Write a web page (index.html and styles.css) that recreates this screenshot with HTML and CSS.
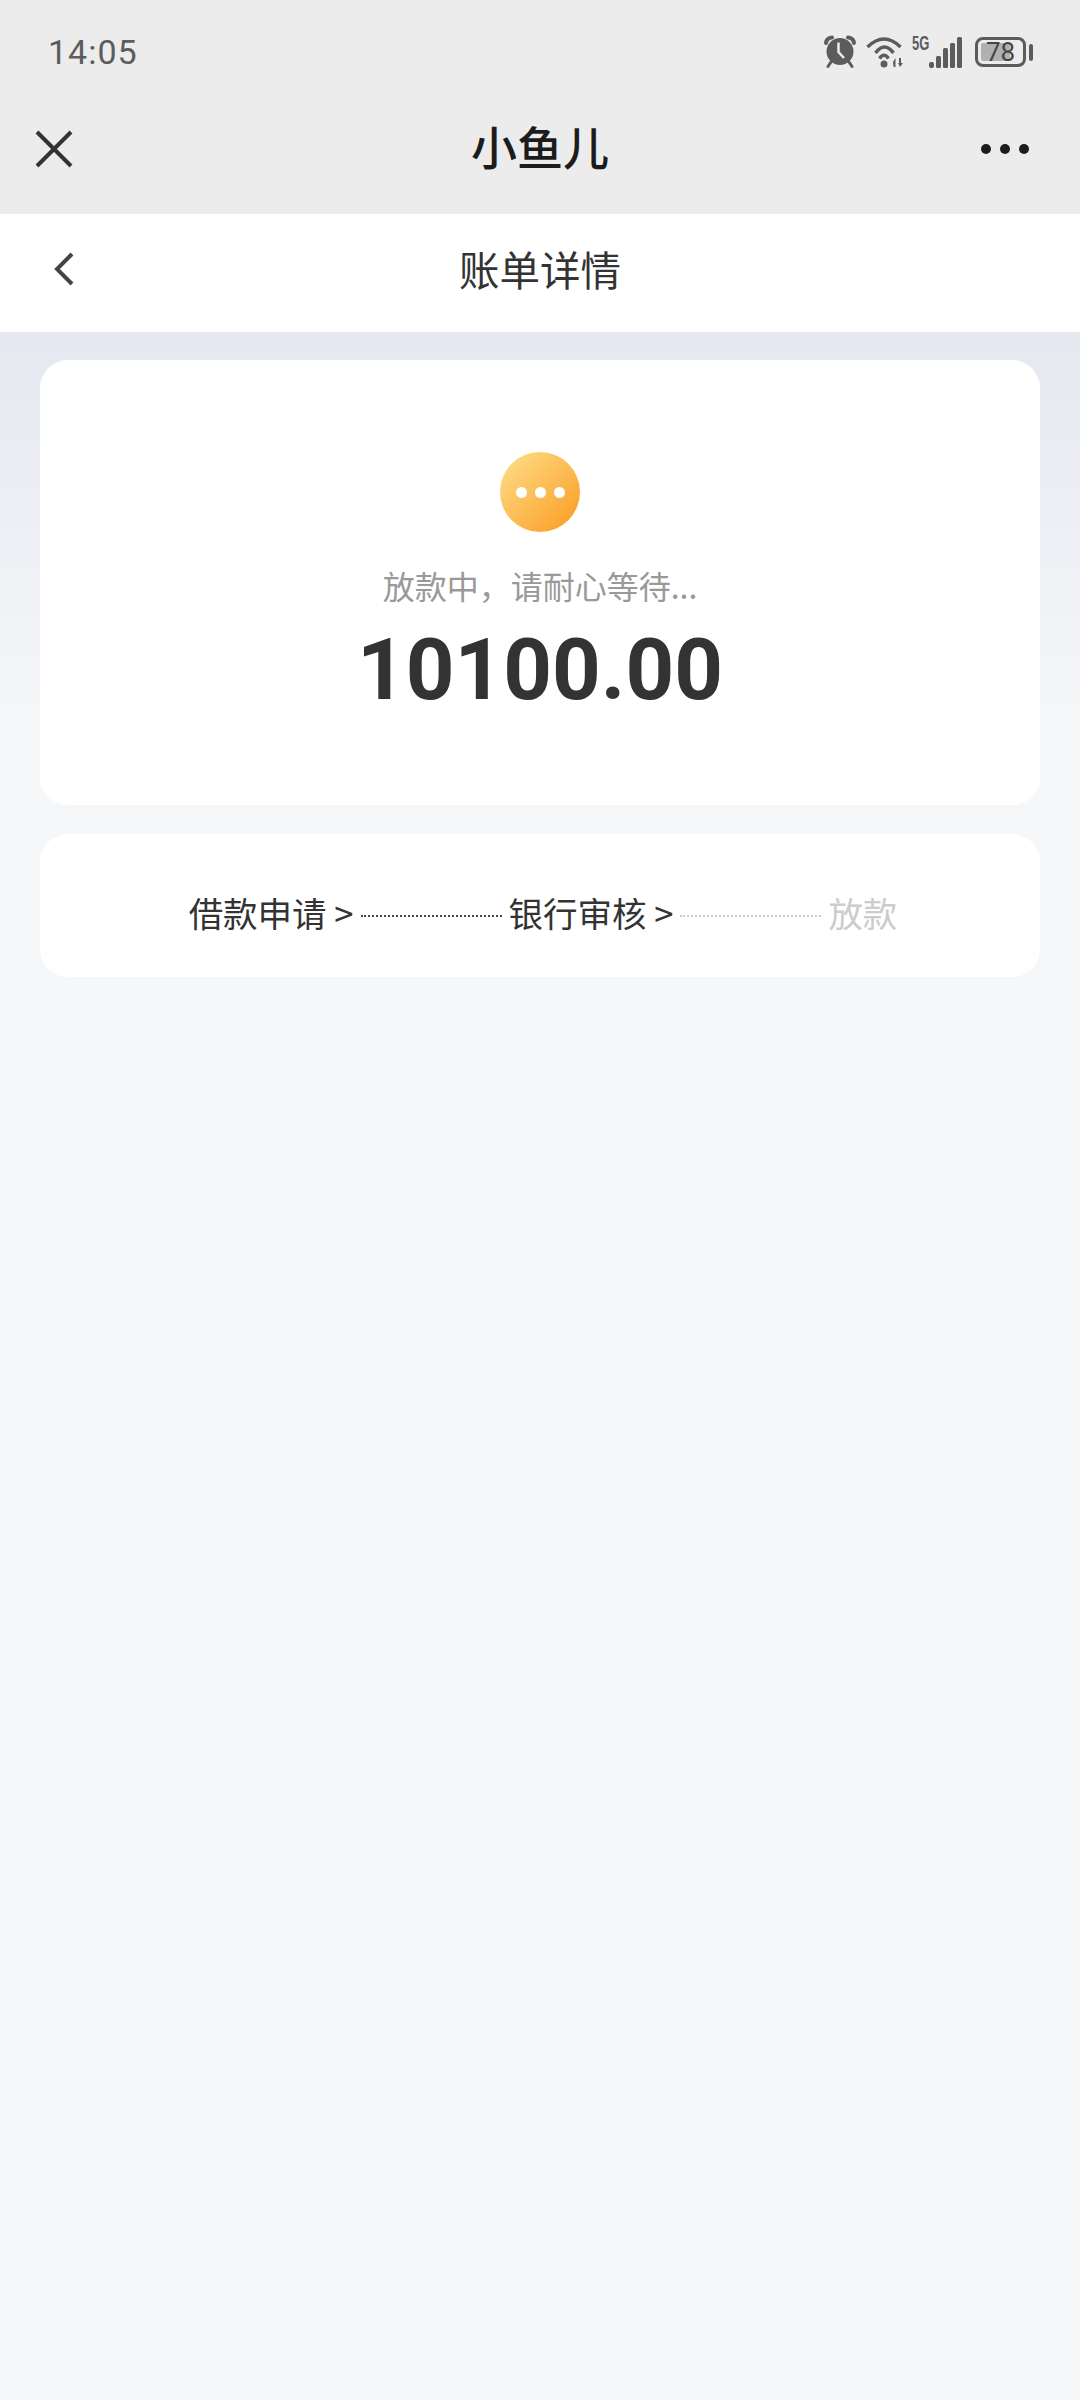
FILE: index.html
```html
<!DOCTYPE html>
<html lang="zh-CN">
<head>
<meta charset="utf-8">
<title>账单详情</title>
<link rel="stylesheet" href="styles.css">
</head>
<body>
<header class="chrome">
  <div class="status">
    <span class="time">14:05</span>
    <div class="status-icons">
      <svg class="ic-alarm" width="34" height="34" viewBox="0 0 34 34"><circle cx="17" cy="16.500" r="13.500" fill="#5c5c5c"/><path d="M3 8Q3.500 3 9 2.500M31 8Q30.500 3 25 2.500" fill="none" stroke="#5c5c5c" stroke-width="4" stroke-linecap="round"/><path d="M8 27 5 31.500M26 27 29 31.500" stroke="#5c5c5c" stroke-width="3" stroke-linecap="round"/><path d="M15.500 7.500V17L21 23" fill="none" stroke="#ececec" stroke-width="2.500"/></svg>
      <svg class="ic-wifi" width="38" height="32" viewBox="0 0 38 32"><g fill="none" stroke="#5c5c5c" stroke-width="3.500"><path d="M1.500 11Q18 -5 34.500 11"/><path d="M9.500 17Q18.500 5 27.500 17"/><path d="M13.500 22.500Q18 16 22.500 22.500"/></g><circle cx="18" cy="28" r="3.500" fill="#5c5c5c"/><path d="M27 26l2.500-4v9h-2zM33 22h2v5l2 0-3 4-2-4h1z" fill="#5c5c5c"/></svg>
      <span class="net">5G</span>
      <svg class="ic-signal" width="33" height="31" viewBox="0 0 33 31"><g fill="#5c5c5c"><rect x="0" y="25" width="5" height="6" rx="2"/><rect x="7" y="19" width="5" height="12" rx="1.500"/><rect x="14" y="11" width="5" height="20" rx="1.500"/><rect x="21" y="6" width="5" height="25" rx="1.500"/><rect x="28" y="0" width="5" height="31" rx="1.500"/></g></svg>
      <div class="battery">
        <div class="battery-body">
          <div class="battery-fill"></div>
          <span class="battery-num">78</span>
        </div>
        <div class="battery-tip"></div>
      </div>
    </div>
  </div>
  <div class="topbar">
    <svg class="ic-close" width="38" height="38" viewBox="0 0 38 38"><path d="M2 2 36 36M36 2 2 36" stroke="#333" stroke-width="4" fill="none"/></svg>
    <h1 class="topbar-title">小鱼儿</h1>
    <svg class="ic-more" width="48" height="10" viewBox="0 0 48 10"><circle cx="5" cy="5" r="5" fill="#1c1c1c"/><circle cx="24" cy="5" r="5" fill="#1c1c1c"/><circle cx="43" cy="5" r="5" fill="#1c1c1c"/></svg>
  </div>
</header>
<nav class="subnav">
  <svg class="ic-back" width="20" height="34" viewBox="0 0 20 34"><path d="M18 2 3 17 18 32" fill="none" stroke="#444" stroke-width="4"/></svg>
  <h2 class="subnav-title">账单详情</h2>
</nav>
<main class="content">
  <section class="card card-status">
    <div class="pending"><i></i><i></i><i></i></div>
    <p class="pending-text">放款中，请耐心等待...</p>
    <p class="amount">10100.00</p>
  </section>
  <section class="card card-steps">
    <span class="step">借款申请 &gt;</span>
    <span class="line"></span>
    <span class="step">银行审核 &gt;</span>
    <span class="line line-off"></span>
    <span class="step step-off">放款</span>
  </section>
</main>
</body>
</html>
```
FILE: styles.css
```css
* { box-sizing: border-box; }
html, body { margin: 0; padding: 0; }
body {
  width: 1080px;
  height: 2400px;
  overflow: hidden;
  background: #f6f7f9;
  font-family: "Noto Sans CJK SC", "Noto Sans", sans-serif;
  display: flex;
  flex-direction: column;
}
.chrome { background: #ececec; height: 214px; }
.status {
  height: 84px;
  padding: 30px 47px 0 48px;
  display: flex;
  justify-content: space-between;
  align-items: flex-start;
}
.time {
  font: 400 34px/44px Roboto, sans-serif;
  color: #5c5c5c;
  letter-spacing: 1px;
}
.status-icons { display: flex; align-items: flex-start; }
.ic-alarm { margin-top: 5px; }
.ic-wifi { margin: 6px 0 0 9px; }
.net {
  font: 700 20px/16px "Liberation Sans", sans-serif;
  color: #5c5c5c;
  width: 17px;
  margin: 5px 0 0 8px;
  transform: scaleX(.65);
  transform-origin: left;
}
.ic-signal { margin: 7px 0 0 0; }
.battery { display: flex; align-items: center; margin: 7px 0 0 13px; }
.battery-body {
  width: 51px;
  height: 30px;
  border: 3px solid #5c5c5c;
  border-radius: 8px;
  padding: 3px;
  position: relative;
}
.battery-fill { width: 74%; height: 100%; background: #b0b0b0; border-radius: 2px; }
.battery-num {
  position: absolute;
  inset: -3px;
  text-align: center;
  font: 400 26px/30px Roboto, sans-serif;
  color: #444;
}
.battery-tip { width: 4px; height: 17px; margin-left: 3px; background: #5c5c5c; border-radius: 2px; }
.topbar {
  height: 130px;
  padding: 0 51px 0 35px;
  display: flex;
  align-items: center;
  justify-content: space-between;
  position: relative;
}
.topbar-title {
  margin: 0;
  position: absolute;
  left: 0;
  right: 0;
  text-align: center;
  font-size: 46px;
  line-height: 66px;
  font-weight: 500;
  color: #1c1c1c;
  top: 28px;
}
.subnav {
  height: 118px;
  background: #fff;
  display: flex;
  align-items: center;
  padding: 0 0 8px 54px;
  position: relative;
}
.subnav-title {
  margin: 0;
  position: absolute;
  left: 0;
  right: 0;
  text-align: center;
  font-size: 40.500px;
  line-height: 60px;
  font-weight: 400;
  color: #333;
  top: 25px;
}
.content {
  flex: 1;
  padding: 28px 40px 0;
  display: flex;
  flex-direction: column;
  gap: 29px;
  background: linear-gradient(180deg, #e5e8f0 0, #f6f7f9 400px);
}
.card { background: #fff; border-radius: 28px; }
.card-status {
  height: 445px;
  padding-top: 92px;
  display: flex;
  flex-direction: column;
  align-items: center;
}
.pending {
  width: 80px;
  height: 80px;
  border-radius: 50%;
  background: linear-gradient(135deg, #fde08c, #fb9a1f);
  display: flex;
  align-items: center;
  justify-content: center;
  gap: 8px;
}
.pending i { width: 11px; height: 11px; border-radius: 50%; background: #fff; }
.pending-text {
  margin: 29px 0 0;
  font-size: 32px;
  line-height: 48px;
  color: #999;
}
.amount {
  margin: 9px 0 0;
  font: 700 85px/104px Roboto, sans-serif;
  color: #333;
}
.card-steps {
  height: 143px;
  padding: 12px 0 0 6px;
  display: flex;
  align-items: center;
  justify-content: center;
}
.step { font-size: 34.500px; line-height: 50px; color: #333; white-space: nowrap; }
.step-off { color: #ccc; }
.line {
  width: 141px;
  height: 0;
  margin: 9px 7px 0;
  border-top: 2px dotted #444;
}
.line-off { border-top-color: #ccc; }
```
